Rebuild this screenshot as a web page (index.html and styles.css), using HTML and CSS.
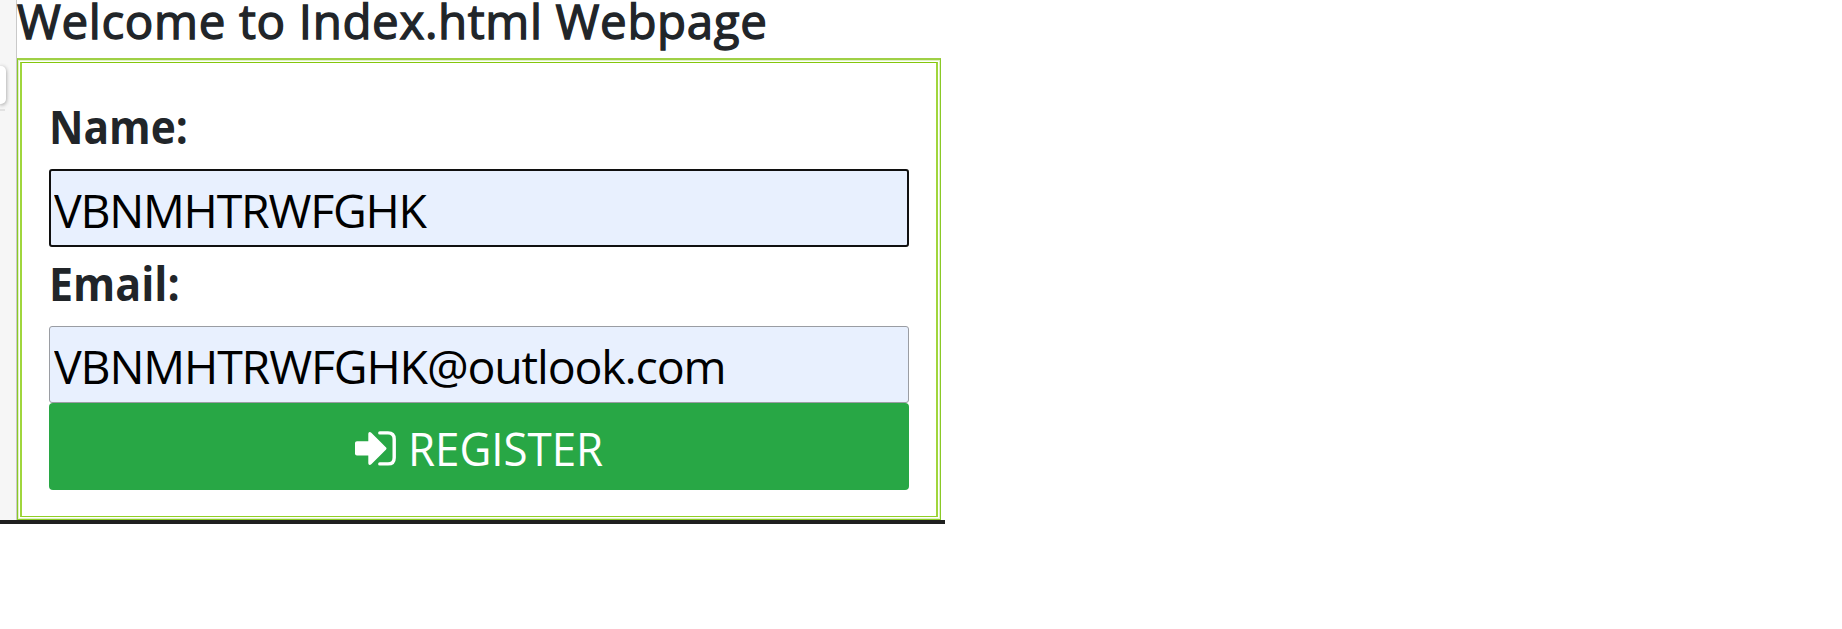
FILE: index.html
```
<!DOCTYPE html>
<html lang="en">
<head>
<meta charset="utf-8">
<title>Register</title>
<link rel="stylesheet" href="styles.css">
</head>
<body>
<main class="preview">
  <aside class="gutter"><div class="gutter-card"></div><div class="gutter-rule"></div></aside>
  <section class="content">
    <h1 class="title">Welcome to Index.html Webpage</h1>
    <form class="form">
      <div class="form-inner">
        <label class="label label-name" for="name">Name:</label>
        <input class="field field-focus" id="name" type="text" value="VBNMHTRWFGHK">
        <label class="label label-email" for="email">Email:</label>
        <input class="field field-email" id="email" type="text" value="VBNMHTRWFGHK@outlook.com">
        <button class="button" type="button">
          <svg class="icon" viewBox="0 0 41 35" aria-hidden="true">
            <path fill="#fff" d="M2 10.200h11.300V3c0-2 1.600-2.600 3-1.200l14.800 14.800c.6.6.6 1.200 0 1.800L16.300 33.200c-1.400 1.400-3 .8-3-1.200v-7.400H2c-1.200 0-2-.8-2-2V12.200c0-1.200.8-2 2-2z"/>
            <path fill="none" stroke="#fff" stroke-width="3.4" stroke-linecap="round" d="M24.800 1.900h8.200q6.200 0 6.200 6.200v18.600q0 6.200-6.200 6.200h-8.200"/>
          </svg>
          <span class="button-text">REGISTER</span>
        </button>
      </div>
    </form>
  </section>
</main>
</body>
</html>
```
FILE: styles.css
```
* { box-sizing: border-box; }
body {
  margin: 0;
  background: #fff;
  color: #212529;
  font-family: "Open Sans", "Noto Sans", sans-serif;
}
.preview {
  display: flex;
  width: 945px;
  height: 524px;
  border-bottom: 4px solid #1f201f;
}
.gutter {
  width: 17px;
  background: #f6f6f6;
  border-right: 1px solid #c9c9c9;
  padding-top: 66px;
  flex: none;
}
.gutter-card {
  width: 6px;
  height: 38px;
  background: #fff;
  border-radius: 0 5px 5px 0;
  box-shadow: 0 1px 4px rgba(0, 0, 0, .4);
}
.gutter-rule {
  width: 5px;
  height: 2px;
  margin-top: 5px;
  background: #e2e2e2;
}
.content { width: 924px; }
.title {
  margin: 0;
  height: 58px;
  font-size: 47.5px;
  line-height: 41px;
  font-weight: 400;
  letter-spacing: .64px;
  -webkit-text-stroke: 1.3px #212529;
  white-space: nowrap;
}
.form {
  height: 462px;
  border: 1px solid #8ac926;
  border-top: 2px solid #9fd046;
  box-shadow: inset 0 0 0 1px #e0f2c2;
  padding: 2px;
}
.form-inner {
  display: flex;
  flex-direction: column;
  align-items: flex-start;
  height: 100%;
  border: 2px solid #a0d63c;
  border-top: 1px solid #84c60c;
  border-bottom: 1px solid #90cf24;
  padding: 33px 27px 0;
}
.label {
  font-size: 46.5px;
  line-height: 60px;
  font-weight: 700;
  transform-origin: left;
}
.label-name { height: 73px; transform: scaleX(.912); }
.label-email { height: 79px; padding-top: 6px; transform: scaleX(.924); }
.field {
  width: 860px;
  height: 78px;
  border: 1px solid #9a9da3;
  border-radius: 3px;
  background: #e8f0fe;
  color: #000;
  padding: 3px 4px 0;
  font-family: inherit;
  font-size: 46.5px;
  letter-spacing: -1.25px;
  outline: none;
}
.field-focus { border: 2px solid #101010; padding: 3px 3px 0; }
.field-email { height: 77px; letter-spacing: -1.15px; }
.button {
  display: flex;
  align-items: center;
  justify-content: flex-start;
  gap: 12px;
  width: 860px;
  height: 87px;
  padding: 3px 0 0 306px;
  border: 0;
  border-radius: 4px;
  background: #28a745;
  color: #fff;
  font-family: inherit;
  font-size: 46.5px;
  line-height: 60px;
}
.button-text { transform: scaleX(.943); transform-origin: left; }
.icon { width: 41px; height: 35px; }
```
